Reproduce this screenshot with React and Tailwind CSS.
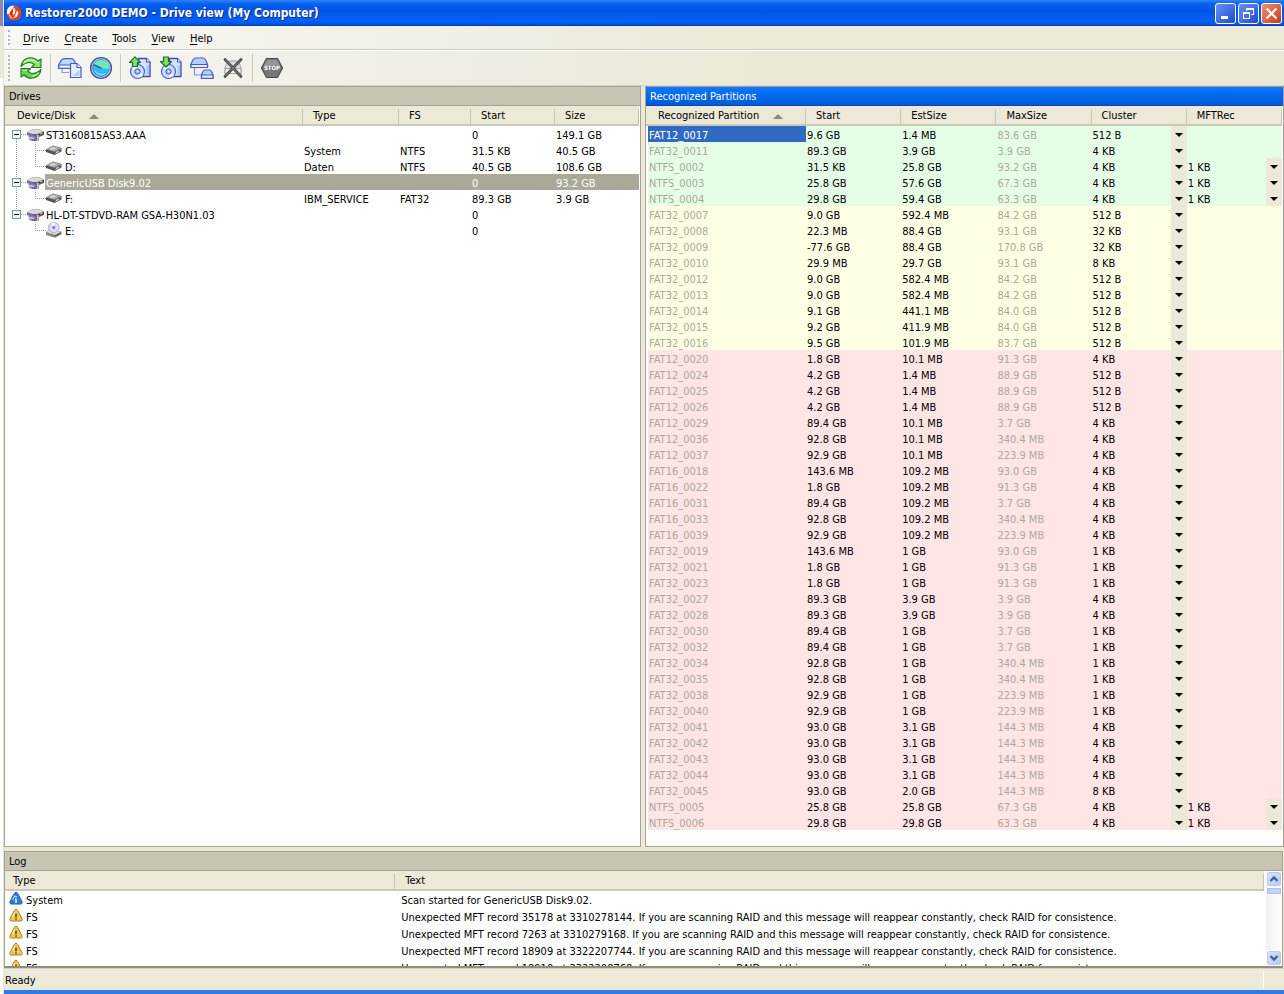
import { useState } from 'react'

const drives = [
  { id: 1, name: 'ST3160815AS3.AAA', icon: 'disk', level: 0, first: true, type: '', fs: '', start: '0', size: '149.1 GB' },
  { id: 2, name: 'C:', icon: 'volume', level: 1, type: 'System', fs: 'NTFS', start: '31.5 KB', size: '40.5 GB' },
  { id: 3, name: 'D:', icon: 'volume', level: 1, last: true, type: 'Daten', fs: 'NTFS', start: '40.5 GB', size: '108.6 GB' },
  { id: 4, name: 'GenericUSB Disk9.02', icon: 'disk', level: 0, type: '', fs: '', start: '0', size: '93.2 GB' },
  { id: 5, name: 'F:', icon: 'volume', level: 1, last: true, type: 'IBM_SERVICE', fs: 'FAT32', start: '89.3 GB', size: '3.9 GB' },
  { id: 6, name: 'HL-DT-STDVD-RAM GSA-H30N1.03', icon: 'disk', level: 0, last: true, type: '', fs: '', start: '0', size: '' },
  { id: 7, name: 'E:', icon: 'optical', level: 1, last: true, rootEnd: true, type: '', fs: '', start: '0', size: '' },
]

// name, start, estimated size, max size, cluster, mft record
const goodPartitions = [
  ['FAT12_0017', '9.6 GB', '1.4 MB', '83.6 GB', '512 B'],
  ['FAT32_0011', '89.3 GB', '3.9 GB', '3.9 GB', '4 KB'],
  ['NTFS_0002', '31.5 KB', '25.8 GB', '93.2 GB', '4 KB', '1 KB'],
  ['NTFS_0003', '25.8 GB', '57.6 GB', '67.3 GB', '4 KB', '1 KB'],
  ['NTFS_0004', '29.8 GB', '59.4 GB', '63.3 GB', '4 KB', '1 KB'],
]

const fairPartitions = [
  ['FAT32_0007', '9.0 GB', '592.4 MB', '84.2 GB', '512 B'],
  ['FAT32_0008', '22.3 MB', '88.4 GB', '93.1 GB', '32 KB'],
  ['FAT32_0009', '-77.6 GB', '88.4 GB', '170.8 GB', '32 KB'],
  ['FAT32_0010', '29.9 MB', '29.7 GB', '93.1 GB', '8 KB'],
  ['FAT32_0012', '9.0 GB', '582.4 MB', '84.2 GB', '512 B'],
  ['FAT32_0013', '9.0 GB', '582.4 MB', '84.2 GB', '512 B'],
  ['FAT32_0014', '9.1 GB', '441.1 MB', '84.0 GB', '512 B'],
  ['FAT32_0015', '9.2 GB', '411.9 MB', '84.0 GB', '512 B'],
  ['FAT32_0016', '9.5 GB', '101.9 MB', '83.7 GB', '512 B'],
]

const poorPartitions = [
  ['FAT12_0020', '1.8 GB', '10.1 MB', '91.3 GB', '4 KB'],
  ['FAT12_0024', '4.2 GB', '1.4 MB', '88.9 GB', '512 B'],
  ['FAT12_0025', '4.2 GB', '1.4 MB', '88.9 GB', '512 B'],
  ['FAT12_0026', '4.2 GB', '1.4 MB', '88.9 GB', '512 B'],
  ['FAT12_0029', '89.4 GB', '10.1 MB', '3.7 GB', '4 KB'],
  ['FAT12_0036', '92.8 GB', '10.1 MB', '340.4 MB', '4 KB'],
  ['FAT12_0037', '92.9 GB', '10.1 MB', '223.9 MB', '4 KB'],
  ['FAT16_0018', '143.6 MB', '109.2 MB', '93.0 GB', '4 KB'],
  ['FAT16_0022', '1.8 GB', '109.2 MB', '91.3 GB', '4 KB'],
  ['FAT16_0031', '89.4 GB', '109.2 MB', '3.7 GB', '4 KB'],
  ['FAT16_0033', '92.8 GB', '109.2 MB', '340.4 MB', '4 KB'],
  ['FAT16_0039', '92.9 GB', '109.2 MB', '223.9 MB', '4 KB'],
  ['FAT32_0019', '143.6 MB', '1 GB', '93.0 GB', '1 KB'],
  ['FAT32_0021', '1.8 GB', '1 GB', '91.3 GB', '1 KB'],
  ['FAT32_0023', '1.8 GB', '1 GB', '91.3 GB', '1 KB'],
  ['FAT32_0027', '89.3 GB', '3.9 GB', '3.9 GB', '4 KB'],
  ['FAT32_0028', '89.3 GB', '3.9 GB', '3.9 GB', '4 KB'],
  ['FAT32_0030', '89.4 GB', '1 GB', '3.7 GB', '1 KB'],
  ['FAT32_0032', '89.4 GB', '1 GB', '3.7 GB', '1 KB'],
  ['FAT32_0034', '92.8 GB', '1 GB', '340.4 MB', '1 KB'],
  ['FAT32_0035', '92.8 GB', '1 GB', '340.4 MB', '1 KB'],
  ['FAT32_0038', '92.9 GB', '1 GB', '223.9 MB', '1 KB'],
  ['FAT32_0040', '92.9 GB', '1 GB', '223.9 MB', '1 KB'],
  ['FAT32_0041', '93.0 GB', '3.1 GB', '144.3 MB', '4 KB'],
  ['FAT32_0042', '93.0 GB', '3.1 GB', '144.3 MB', '4 KB'],
  ['FAT32_0043', '93.0 GB', '3.1 GB', '144.3 MB', '4 KB'],
  ['FAT32_0044', '93.0 GB', '3.1 GB', '144.3 MB', '4 KB'],
  ['FAT32_0045', '93.0 GB', '2.0 GB', '144.3 MB', '8 KB'],
  ['NTFS_0005', '25.8 GB', '25.8 GB', '67.3 GB', '4 KB', '1 KB'],
  ['NTFS_0006', '29.8 GB', '29.8 GB', '63.3 GB', '4 KB', '1 KB'],
]

const partitionGroups = [
  { key: 'good', className: 'bg-[#e5ffe6]', rows: goodPartitions },
  { key: 'fair', className: 'bg-[#ffffe5]', rows: fairPartitions },
  { key: 'poor', className: 'bg-[#ffe5e6]', rows: poorPartitions },
]

const mftMessage = (record, position) =>
  `Unexpected MFT record ${record} at ${position}. If you are scanning RAID and this message will reappear constantly, check RAID for consistence.`

const logEntries = [
  { id: 1, type: 'System', text: 'Scan started for GenericUSB Disk9.02.' },
  { id: 2, type: 'FS', text: mftMessage(35178, 3310278144) },
  { id: 3, type: 'FS', text: mftMessage(7263, 3310279168) },
  { id: 4, type: 'FS', text: mftMessage(18909, 3322207744) },
  { id: 5, type: 'FS', text: mftMessage(18910, 3322208768) },
]

const menus = ['Drive', 'Create', 'Tools', 'View', 'Help']
const sizes = ['512 B', '1 KB', '2 KB', '4 KB', '8 KB', '16 KB', '32 KB', '64 KB']

/* ---------- icons ---------- */

const AppIcon = () => (
  <svg width="16" height="16" viewBox="0 0 16 16">
    <circle cx="8" cy="8" r="7.5" fill="#e8421c" />
    <path d="M1 5C2 2 5 .6 8 .6L5.500 6 3.500 9 1 9z" fill="#fff" />
    <path d="M7.500 2l2 3-1 4-2 1 .5-4z" fill="#fff" />
    <path d="M11 5.500l1.500 2-1.500 4-3.500 2 2-4z" fill="#fff" />
    <path d="M2.500 10l2-1 1 3 2 2c-2-.2-4-1.600-5-4z" fill="#f6b9a8" />
    <path d="M3.500 8.500L6 4l.6 3.500L5 11z" fill="#c62a10" />
  </svg>
)

const RefreshIcon = () => (
  <svg width="24" height="24" viewBox="0 0 24 24" stroke="#1c7a1e" strokeWidth="1.100" strokeLinejoin="round">
    <path d="M2 10.500C2.500 5 6.500 1.800 11.500 1.800c3.300 0 5.500 1.200 7.500 3.200l3-2v8.500H12.500L15.300 8.500C11.500 5.500 6.500 6.200 2 10.500z" fill="#86e468" />
    <path d="M22 13.500c-.5 5.500-4.500 8.700-9.500 8.700-3.300 0-5.500-1.200-7.500-3.200l-3 2v-8.500h9.500L8.700 15.500c3.800 3 8.800 2.300 13.300-2z" fill="#66d24e" />
    <path d="M4.800 7C8.500 2.800 14.500 2.600 18.800 7" fill="none" stroke="#d8fac8" strokeWidth="1.200" />
    <path d="M3.500 14.500H8M13 20c2.800-.2 4.800-1.200 6.500-3.500" fill="none" stroke="#c4f5ba" strokeWidth="1.200" />
  </svg>
)

const DriveCopyIcon = () => (
  <svg width="24" height="24" viewBox="0 0 24 24" stroke="#4a5cc8" strokeWidth="1.200" strokeLinejoin="round">
    <path d="M.8 9C2 6 3.500 2.600 6 2.600h7.500C16 2.600 17 6 18.200 9v3.400H.8z" fill="#c2d8fc" />
    <path d="M.8 9h17.400v3.400H.8z" fill="#eaf2ff" />
    <path d="M4 12.500v4h7" fill="none" stroke="#8a98e0" />
    <path d="M12.500 7.500h6.500l4 4V21.500H12.500z" fill="#e4eeff" />
    <path d="M19 7.500v4h4" fill="#fff" />
    <path d="M14 20h7.500v-6z" fill="#b6cffa" stroke="none" />
  </svg>
)

const ScanIcon = () => (
  <svg width="24" height="24" viewBox="0 0 24 24">
    <circle cx="12" cy="12" r="10.400" fill="#d4ecfa" stroke="#3a50a4" strokeWidth="1.400" />
    <circle cx="12" cy="12" r="8.400" fill="#38b8f6" stroke="#3f7cb8" strokeWidth="1" />
    <path d="M12 12L4.600 8.500C6 5 11 3 15.500 4.600c4 1.600 5.600 5 4.600 8.400z" fill="#74e8bc" />
    <path d="M12.500 12.300L4.600 8.600" stroke="#17637c" strokeWidth="1.300" />
    <path d="M6 15c2 3.500 6.500 4.600 10 2.800" fill="none" stroke="#8fdcff" strokeWidth="1.200" />
  </svg>
)

const DiscPage = ({ children }) => (
  <svg width="24" height="24" viewBox="0 0 24 24" strokeLinejoin="round">
    <path d="M10.500 2.500h8l3.500 3.500v14.500H10.500z" fill="#d6e3fd" stroke="#3c48b8" strokeWidth="1.300" />
    <path d="M18.500 2.500V6H22" fill="#fff" stroke="#3c48b8" />
    <path d="M18.500 9h2.500v10h-2.500z" fill="#b0c8f8" />
    <circle cx="9.500" cy="15.500" r="7" fill="#cfe0fd" stroke="#4a5cc8" strokeWidth="1.200" />
    <path d="M9.500 15.500L4 12a6 6 0 0 1 4-2.500zM9.500 15.500L15 19a6 6 0 0 1-4 2.500z" fill="#fff" />
    <circle cx="9.500" cy="15.500" r="2.700" fill="#8fb0f4" stroke="#4a5cc8" />
    <circle cx="9.500" cy="15.500" r="1" fill="#fff" />
    {children}
  </svg>
)

const OpenImageIcon = () => (
  <DiscPage>
    <path d="M7 .8l5.500 5.700H9.500v4h-5v-4h-3z" fill="#7fe070" stroke="#12701a" strokeWidth="1.200" />
  </DiscPage>
)

const SaveImageIcon = () => (
  <DiscPage>
    <path d="M4.500 1h5v4.500h3L7 11 1.500 5.500h3z" fill="#7fe070" stroke="#12701a" strokeWidth="1.200" />
  </DiscPage>
)

const VirtualDrivesIcon = () => (
  <svg width="24" height="24" viewBox="0 0 24 24" stroke="#4a5cc8" strokeWidth="1.200" strokeLinejoin="round">
    <path d="M1 8.500c1-3 2-6.500 4.500-6.500h7.500c2.500 0 3.500 3.500 4.500 6.500v3H1z" fill="#b4d0fc" />
    <path d="M1 8.500h16.500v3H1z" fill="#e6effe" />
    <path d="M4.500 11.500v7.500h7" fill="none" stroke="#7f8edc" />
    <path d="M11.500 19c1-2.500 1.500-5 3.500-5h4.500c2 0 2.500 2.500 3.500 5v3.300H11.500z" fill="#b4d0fc" />
    <path d="M11.500 19H23v3.300H11.500z" fill="#e6effe" />
  </svg>
)

const RemoveIcon = () => (
  <svg width="24" height="24" viewBox="0 0 24 24">
    <path d="M4 12c1-3.500 2.500-7 5-7h6c2.500 0 4 3.500 5 7v5.500H4z" fill="#dedede" stroke="#949494" />
    <path d="M4 12.500h16v5H4z" fill="#efefef" stroke="#a4a4a4" />
    <path d="M4 3.500L20 20.500M20 3.500L4 20.500" stroke="#4c4c4c" strokeWidth="2.800" strokeLinecap="round" />
    <path d="M4.500 4l15 16M19.500 4l-15 16" stroke="#8a8a8a" strokeWidth=".8" />
  </svg>
)

const StopIcon = () => (
  <svg width="24" height="24" viewBox="0 0 24 24">
    <path d="M6.500 2.500h11L22.500 12l-5 9.500h-11L1.500 12z" fill="#777" stroke="#4c4c4c" strokeWidth="1.200" />
    <path d="M7 4h10l3 5H4z" fill="#959595" />
    <text x="12" y="14" textAnchor="middle" fontSize="6" fontWeight="bold" fill="#fff" fontFamily="DejaVu Sans Condensed, sans-serif" textRendering="geometricPrecision">STOP</text>
  </svg>
)

const DiskIcon = () => (
  <svg className="shrink-0" width="18" height="16" viewBox="0 0 18 16">
    <path d="M0 6.500L5.500 3h6l5.500 2.500V9l-6 2.500H6L0 9z" fill="#777" />
    <path d="M.5 6.300L5.500 3.300h6L16.500 5.500 10.500 8H6z" fill="#dadada" />
    <path d="M6 8.300h4.500l6.500-2.500v2.500L10.500 11H6z" fill="#4e4e4e" />
    <path d="M13 7.500l2.500-1v1l-2.500 1z" fill="#d0d0d0" />
    <path d="M1.500 9.500H8v2H1.500zM1.500 12.500H8v2H3z" fill="#8278cc" />
    <path d="M7.500 8.500H12V15H5v-2h2.500z" fill="#6e62c0" />
    <path d="M10 9h1.500v6H10z" fill="#e6cf68" />
  </svg>
)

const VolumeIcon = () => (
  <svg className="shrink-0" width="16" height="16" viewBox="0 0 16 16">
    <path d="M0 7.500l7-4 8.500 2.500v3.500L8.500 13 0 10z" fill="#555" />
    <path d="M.5 7.300L7 3.800l8 2.400-6.500 3.500z" fill="#a8a8a8" />
    <path d="M3 7l4-2.200 4 1.200-4 2.300z" fill="#cfcfcf" />
    <path d="M8.500 10.100l6.500-3.500v2.800l-6.500 3z" fill="#6e6e6e" />
    <path d="M10 10.500l2.500-1.100" stroke="#fff" />
  </svg>
)

const OpticalIcon = () => (
  <svg className="shrink-0" width="16" height="16" viewBox="0 0 16 16">
    <path d="M0 10l4-3 11.500 2.500V12L9 15.700 0 13z" fill="#888" />
    <path d="M.5 10l4-2.700L15 9.700 9 12.700z" fill="#e4e4e4" />
    <path d="M9 13.200l6-3v1.700l-6 3.200z" fill="#5c5c5c" />
    <ellipse cx="7.800" cy="5.500" rx="5.300" ry="5.200" fill="#dcdcf4" stroke="#a0a0b4" strokeWidth=".8" />
    <path d="M7.800 5.500L5 1.200A5 5 0 0 1 9 .8z" fill="#fff" />
    <circle cx="7.800" cy="5.500" r="1.500" fill="#7a74d8" />
  </svg>
)

const LogIcon = ({ info }) => (
  <svg className="shrink-0" width="14" height="14" viewBox="0 0 14 14">
    <path
      d="M7 1.300c.8 0 1.300.4 1.700 1.200l4.300 8.300c.6 1.300 0 2.200-1.400 2.200H2.400C1 13 .4 12.100 1 10.800L5.300 2.500C5.700 1.700 6.200 1.300 7 1.300z"
      fill={info ? '#2a7fd8' : '#f2c84c'}
      stroke={info ? '#1a58a8' : '#a87a1c'}
    />
    <path d="M6 4.500L3.500 9" stroke={info ? '#9ccaf4' : '#fdf0c0'} strokeWidth="1.300" />
    <path d={info ? 'M7 7.500v4.500M7 5v1.300' : 'M7 5.500v3.800M7 10.300v1.400'} stroke={info ? '#fff' : '#4a3c28'} strokeWidth="1.400" />
  </svg>
)

const icons = { disk: DiskIcon, volume: VolumeIcon, optical: OpticalIcon }

/* ---------- small parts ---------- */

const ToolButton = ({ label, children }) => (
  <button type="button" aria-label={label} className="flex size-6 items-center justify-center">
    {children}
  </button>
)

const Grip = () => <span className="my-1 w-0 shrink-0 self-stretch border-l-2 border-dotted border-[#b9b6a6]" />

const ToolSeparator = () => <span className="mx-[7px] h-7 w-px bg-[#cbc8b8]" />

const Caption = ({ title, active }) => (
  <h2
    className={
      active
        ? 'h-[19px] border-b border-[#0047b8] bg-linear-to-b from-[#0a78ff] to-[#0059d8] px-1 pt-0.5 leading-4 text-white'
        : 'h-[19px] border-b border-[#a5a291] bg-[#c8c5b5] px-1 pt-0.5 leading-4'
    }
  >
    {title}
  </h2>
)

const HeaderCell = ({ children, sorted, indent = 'pl-2.5' }) => (
  <th scope="col" className="h-5 border-b-2 border-[#cdc9b9] bg-[#ece9d9] p-0 text-left font-normal">
    <div
      className={`mt-0.5 flex h-[15px] items-center border-r border-[#c7c4b2] pt-px whitespace-nowrap shadow-[1px_0_0_#fff] ${sorted ? 'pl-3' : indent}`}
    >
      {children}
      {sorted && (
        <svg className="ml-3.5" width="10" height="5" viewBox="0 0 10 5">
          <path d="M5 0l5 5H0z" fill="#8a887c" />
        </svg>
      )}
    </div>
  </th>
)

const SizeSelect = ({ label, defaultValue }) => (
  <div className="relative flex h-4">
    <select
      aria-label={label}
      defaultValue={defaultValue}
      className="h-4 min-w-0 flex-1 appearance-none bg-transparent p-0 pt-1 pl-px leading-3 outline-none"
    >
      {sizes.map((size) => (
        <option key={size}>{size}</option>
      ))}
    </select>
    <span className="pointer-events-none absolute inset-y-0 right-0 flex w-4 items-center justify-center bg-[#ece9d8] pt-0.5">
      <svg width="8" height="4" viewBox="0 0 8 4">
        <path d="M0 0h8L4 4z" />
      </svg>
    </span>
  </div>
)

const RootGuide = ({ drive, open, onToggle }) => (
  <button type="button" aria-label={`Toggle ${drive.name}`} onClick={onToggle} className="h-4 w-[22px] shrink-0">
    <svg width="22" height="16" viewBox="0 0 22 16" shapeRendering="crispEdges" fill="none">
      <path d={drive.first ? 'M11.500 9V16' : drive.last ? 'M11.500 0V8' : 'M11.500 0V16'} stroke="#a0a0a0" strokeDasharray="1 1" />
      <path d="M16 8.500h6" stroke="#a0a0a0" strokeDasharray="1 1" />
      <path d="M7.500 4.500h8v8h-8z" fill="#f4f3ee" stroke="#7b98b4" />
      <path d={open ? 'M9 8.500h5' : 'M9 8.500h5M11.500 6v5'} stroke="#000" />
    </svg>
  </button>
)

const ChildGuide = ({ drive }) => (
  <svg className="shrink-0" width="41" height="16" viewBox="0 0 41 16" shapeRendering="crispEdges" fill="none" stroke="#a0a0a0" strokeDasharray="1 1">
    {!drive.rootEnd && <path d="M11.500 0V16" />}
    <path d={drive.last ? 'M30.500 0V8' : 'M30.500 0V16'} />
    <path d="M30 8.500h11" />
  </svg>
)

const DriveTable = () => {
  const [selected, setSelected] = useState(4)
  const [closed, setClosed] = useState([])

  const toggle = (id) => setClosed(closed.includes(id) ? closed.filter((c) => c !== id) : [...closed, id])

  let parent = null
  const visible = drives.filter((drive) => {
    if (drive.level === 0) {
      parent = drive.id
      return true
    }
    return !closed.includes(parent)
  })

  return (
    <div className="pr-px">
      <table className="w-full table-fixed border-separate border-spacing-0">
        <colgroup>
          <col />
          <col className="w-24" />
          <col className="w-[72px]" />
          <col className="w-[84px]" />
          <col className="w-[84px]" />
        </colgroup>
        <thead>
          <tr>
            <HeaderCell sorted>Device/Disk</HeaderCell>
            <HeaderCell>Type</HeaderCell>
            <HeaderCell>FS</HeaderCell>
            <HeaderCell>Start</HeaderCell>
            <HeaderCell>Size</HeaderCell>
          </tr>
        </thead>
        <tbody>
          {visible.map((drive) => {
            const Icon = icons[drive.icon]
            const tone = drive.id === selected ? 'bg-[#aca899] text-white' : ''
            return (
              <tr key={drive.id} className="leading-3 whitespace-nowrap" onClick={() => setSelected(drive.id)}>
                <td className="p-0">
                  <div className="flex h-4">
                    {drive.level === 0 ? (
                      <RootGuide drive={drive} open={!closed.includes(drive.id)} onToggle={() => toggle(drive.id)} />
                    ) : (
                      <ChildGuide drive={drive} />
                    )}
                    <Icon />
                    <span className={`flex-1 pt-1 ${drive.level === 0 ? 'pl-px' : 'pl-[3px]'} ${tone}`}>{drive.name}</span>
                  </div>
                </td>
                <td className={`p-0 pt-1 pl-px ${tone}`}>{drive.type}</td>
                <td className={`p-0 pt-1 pl-px ${tone}`}>{drive.fs}</td>
                <td className={`p-0 pt-1 pl-px ${tone}`}>{drive.start}</td>
                <td className={`p-0 pt-1 pl-px ${tone}`}>{drive.size}</td>
              </tr>
            )
          })}
        </tbody>
      </table>
    </div>
  )
}

const PartitionTable = () => {
  const [selected, setSelected] = useState('FAT12_0017')

  return (
    <div className="pr-px">
      <table className="w-full table-fixed border-separate border-spacing-0">
        <colgroup>
          <col className="w-[160px]" />
          <col />
          <col />
          <col />
          <col />
          <col />
        </colgroup>
        <thead>
          <tr>
            <HeaderCell sorted>Recognized Partition</HeaderCell>
            <HeaderCell>Start</HeaderCell>
            <HeaderCell>EstSize</HeaderCell>
            <HeaderCell>MaxSize</HeaderCell>
            <HeaderCell>Cluster</HeaderCell>
            <HeaderCell>MFTRec</HeaderCell>
          </tr>
        </thead>
        {partitionGroups.map((group) => (
          <tbody key={group.key} className={group.className}>
            {group.rows.map(([name, start, estSize, maxSize, cluster, mft]) => (
              <tr key={name} className="leading-3 whitespace-nowrap" onClick={() => setSelected(name)}>
                <td
                  className={`border-l-2 border-white p-0 pt-1 pl-px ${
                    name === selected ? 'bg-[#316ac5] text-white' : 'text-[#aca899]'
                  }`}
                >
                  {name}
                </td>
                <td className="p-0 pt-1 pl-px">{start}</td>
                <td className="p-0 pt-1 pl-px">{estSize}</td>
                <td className="p-0 pt-1 pl-px text-[#aca899]">{maxSize}</td>
                <td className="p-0">
                  <SizeSelect label={`${name} cluster`} defaultValue={cluster} />
                </td>
                <td className="p-0">{mft && <SizeSelect label={`${name} MFT record`} defaultValue={mft} />}</td>
              </tr>
            ))}
          </tbody>
        ))}
      </table>
    </div>
  )
}

const ScrollArrow = ({ label, d }) => (
  <button
    type="button"
    aria-label={label}
    className="flex size-4 items-center justify-center rounded-sm border border-white bg-linear-to-br from-[#dbe6fe] to-[#b4caf8] outline -outline-offset-2 outline-[#b4c8f6]"
  >
    <svg width="10" height="8" viewBox="0 0 10 8" fill="none">
      <path d={d} stroke="#4d6185" strokeWidth="2.400" />
    </svg>
  </button>
)

const LogPanel = () => (
  <section className="mt-1 mr-px border border-b-2 border-[#a5a291] border-b-[#8f8c80] bg-white">
    <Caption title="Log" />
    <div className="flex">
      <div className="h-[95px] min-w-0 flex-1 overflow-hidden pr-0.5">
        <table className="w-full table-fixed border-separate border-spacing-0">
          <colgroup>
            <col className="w-[31%]" />
            <col />
          </colgroup>
          <thead>
            <tr>
              <HeaderCell indent="pl-2">Type</HeaderCell>
              <HeaderCell>Text</HeaderCell>
            </tr>
          </thead>
          <tbody>
            {logEntries.map((entry) => (
              <tr key={entry.id} className="leading-[15px] whitespace-nowrap">
                <td className="p-0">
                  <div className="flex h-[17px] gap-[3px] pl-1">
                    <LogIcon info={entry.type === 'System'} />
                    <span className="pt-0.5">{entry.type}</span>
                  </div>
                </td>
                <td className="overflow-hidden p-0 pt-0.5 pl-1.5">{entry.text}</td>
              </tr>
            ))}
          </tbody>
        </table>
      </div>
      <div className="flex w-4 shrink-0 flex-col bg-linear-to-r from-[#f1f1ec] to-[#fdfdfb]">
        <ScrollArrow label="Scroll up" d="M1.500 6L5 2.500 8.500 6" />
        <div className="h-2 rounded-xs border border-white bg-[#c3d3fb] outline -outline-offset-2 outline-[#a9bff2]" />
        <div className="flex-1" />
        <ScrollArrow label="Scroll down" d="M1.500 2L5 5.500 8.500 2" />
      </div>
    </div>
  </section>
)

const windowButton = 'flex size-[21px] items-center justify-center rounded-[3px] border border-white bg-linear-to-br'

const TitleBar = () => (
  <header className="flex h-[26px] items-center bg-[linear-gradient(#2a86ff,#0a5ef0_15%,#0054e3_45%,#0262fa_80%,#0050d8_94%,#003bb0)] pr-0.5 pl-0.5">
    <AppIcon />
    <h1 className="ml-[3px] flex-1 text-[12px] font-bold whitespace-nowrap text-white [text-shadow:1px_1px_#0a2a86]">
      Restorer2000 DEMO - Drive view (My Computer)
    </h1>
    <div className="flex gap-0.5">
      <button type="button" aria-label="Minimize" className={`${windowButton} from-[#6a92f4] to-[#1d48d0]`}>
        <svg width="13" height="13" viewBox="0 0 13 13">
          <path d="M2 9h7v3H2z" fill="#fff" />
        </svg>
      </button>
      <button type="button" aria-label="Restore" className={`${windowButton} from-[#6a92f4] to-[#1d48d0]`}>
        <svg width="13" height="13" viewBox="0 0 13 13" fill="none" stroke="#fff" shapeRendering="crispEdges">
          <path d="M4.500 4V1.500h7v6H9M4 2.500h8M1.500 5.500h6v6h-6zM1 6.500h7" />
        </svg>
      </button>
      <button type="button" aria-label="Close" className={`${windowButton} from-[#f09070] to-[#cc3410]`}>
        <svg width="13" height="13" viewBox="0 0 13 13" stroke="#fff" strokeWidth="2.200">
          <path d="M1.500 1.500l10 10M11.500 1.500l-10 10" />
        </svg>
      </button>
    </div>
  </header>
)

const App = () => {
  return (
    <div className="flex min-h-screen bg-white font-['DejaVu_Sans_Condensed','DejaVu_Sans',sans-serif] text-[11px] text-black">
      {/* edge of the window behind */}
      <div className="flex w-1 shrink-0 flex-col border-r border-[#e4e2d6]">
        <div className="h-[26px] bg-[#8f86b8]" />
        <div className="h-[52px] bg-[#ece9d8]" />
      </div>

      <div className="flex min-w-0 flex-1 flex-col border-b-4 border-[#2f7be6] bg-[#ece9d8]">
        <TitleBar />

        <nav className="flex h-6 items-center border-b border-[#cfccbd] bg-linear-to-r from-[#f8f8f6] to-[#ece9d8] to-60% pl-1">
          <Grip />
          <div className="flex gap-[13px] pt-[3px] pl-3">
            {menus.map((menu) => (
              <button key={menu} type="button" className="px-px">
                <span className="underline underline-offset-2">{menu[0]}</span>
                {menu.slice(1)}
              </button>
            ))}
          </div>
        </nav>

        <div className="flex h-9 items-center border-t border-b border-t-white border-b-[#d8d4c4] bg-linear-to-r from-[#f6f6f3] to-[#ebe8d7] to-60% pl-1">
          <Grip />
          <div className="ml-[9px] flex items-center">
            <ToolButton label="Refresh">
              <RefreshIcon />
            </ToolButton>
            <ToolSeparator />
            <div className="flex gap-[7px]">
              <ToolButton label="Open drive files">
                <DriveCopyIcon />
              </ToolButton>
              <ToolButton label="Scan">
                <ScanIcon />
              </ToolButton>
            </div>
            <ToolSeparator />
            <div className="flex gap-[7px]">
              <ToolButton label="Open image">
                <OpenImageIcon />
              </ToolButton>
              <ToolButton label="Create image">
                <SaveImageIcon />
              </ToolButton>
              <ToolButton label="Virtual drives">
                <VirtualDrivesIcon />
              </ToolButton>
              <ToolButton label="Remove">
                <RemoveIcon />
              </ToolButton>
            </div>
            <ToolSeparator />
            <ToolButton label="Stop">
              <StopIcon />
            </ToolButton>
          </div>
        </div>

        <main className="grid flex-1 grid-cols-[637fr_639fr] gap-x-1">
          <section className="min-w-0 border border-[#a5a291] bg-white">
            <Caption title="Drives" />
            <DriveTable />
          </section>
          <section className="min-w-0 border border-[#a5a291] bg-white pb-4">
            <Caption title="Recognized Partitions" active />
            <PartitionTable />
          </section>
        </main>

        <LogPanel />

        <footer className="flex h-[22px] items-center justify-between border-t border-[#d6d2c2] pl-px">
          <span className="pt-[3px]">Ready</span>
          <span className="mr-5 h-[18px] w-px bg-white" />
        </footer>
      </div>
    </div>
  )
}

export default App
